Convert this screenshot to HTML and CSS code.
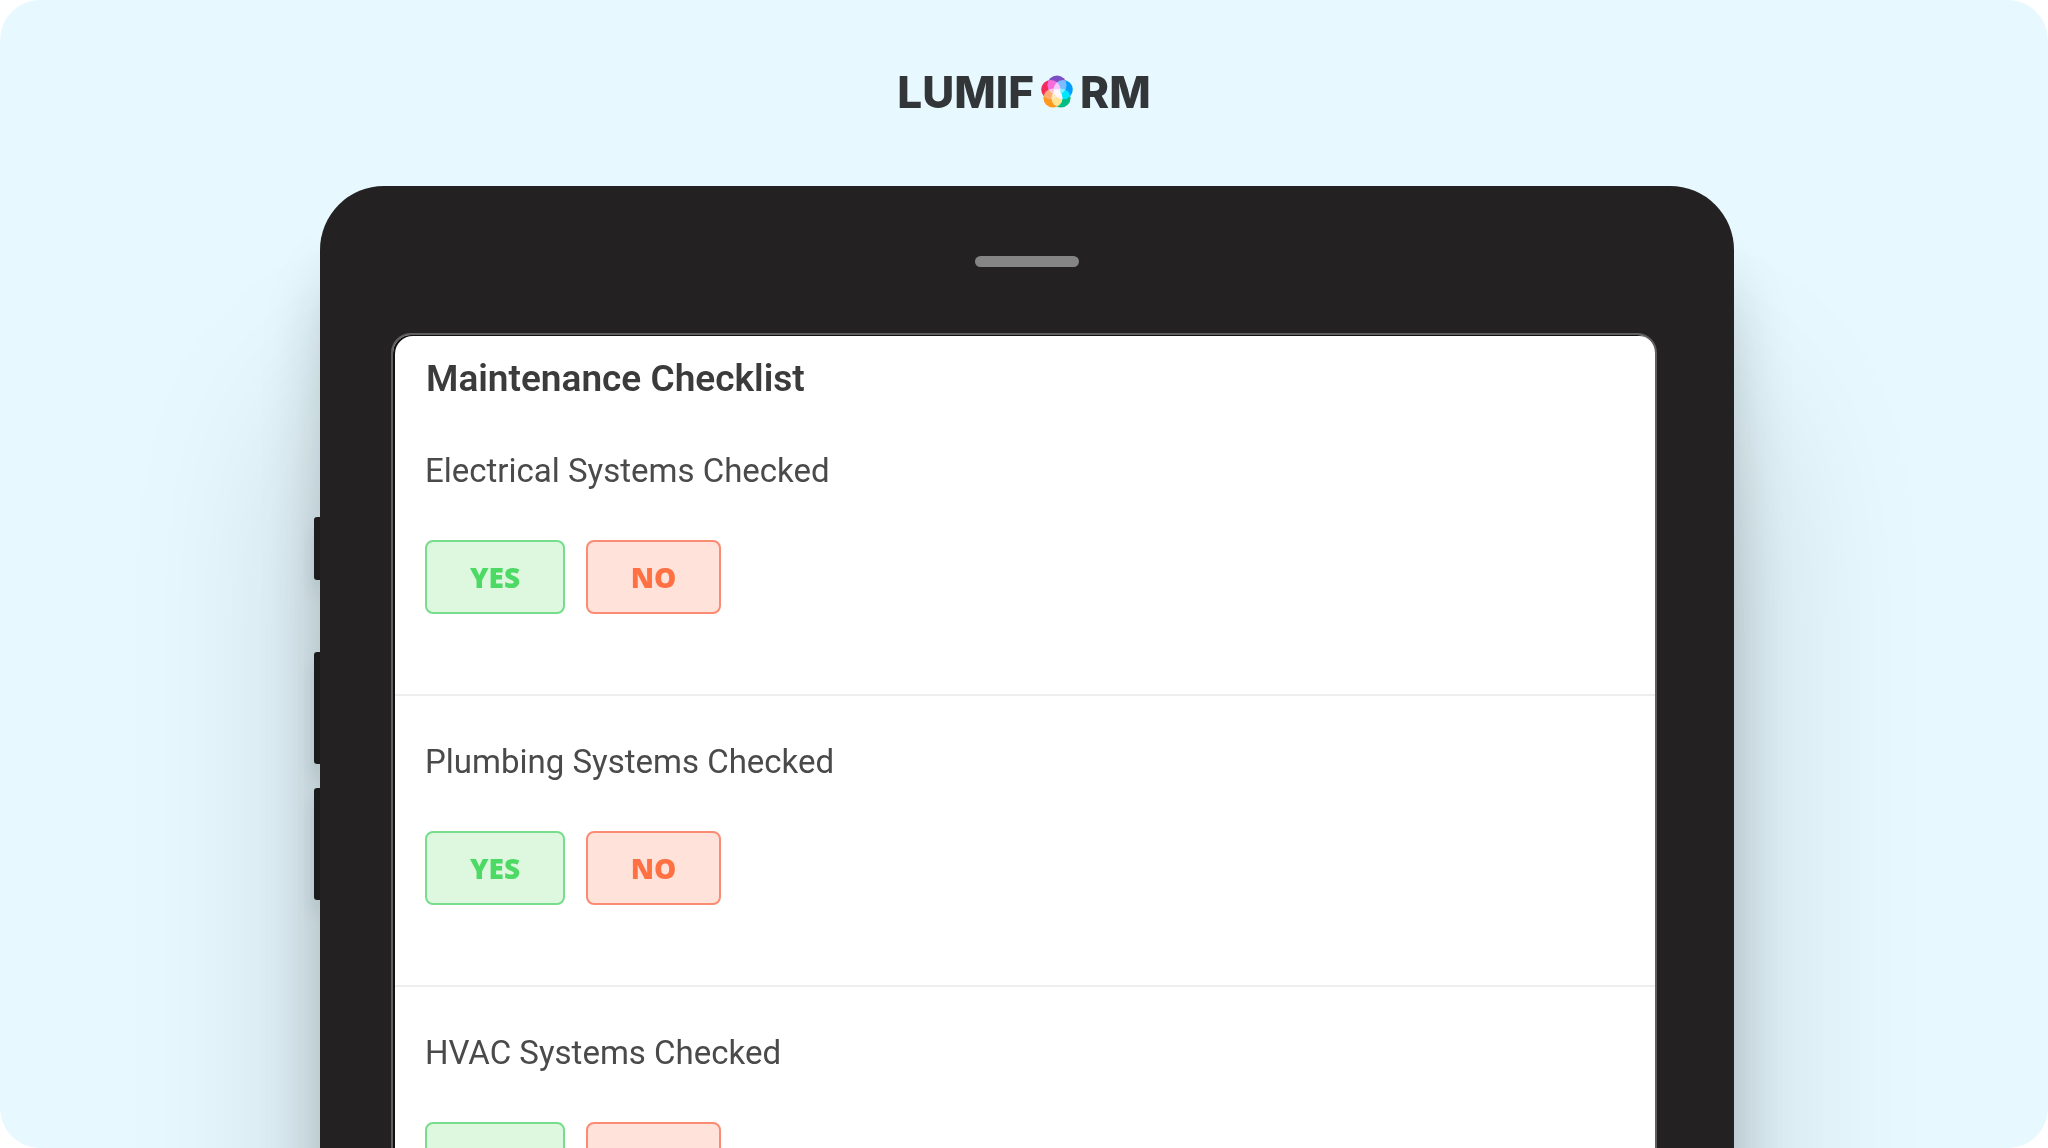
FILE: index.html
```html
<!DOCTYPE html>
<html lang="en">
<head>
<meta charset="utf-8">
<title>Lumiform – Maintenance Checklist</title>
<meta name="viewport" content="width=device-width, initial-scale=1">
<link rel="stylesheet" href="styles.css">
</head>
<body>
<div class="stage">
  <header class="brand">
    <span>LUMIF</span>
    <svg class="brand-mark" viewBox="0 0 32 34" role="img" aria-label="O">
      <g class="petals">
        <circle cx="16" cy="10" r="9.600" fill="#7d4fc4"/>
        <circle cx="22.200" cy="14.600" r="9.600" fill="#009dff"/>
        <circle cx="20" cy="23" r="9.600" fill="#00bd83"/>
        <circle cx="12" cy="23" r="9.600" fill="#ff9a1f"/>
        <circle cx="9.800" cy="14.600" r="9.600" fill="#f32a5e"/>
      </g>
    </svg>
    <span>RM</span>
  </header>

  <div class="device">
    <div class="side-keys">
      <i class="key key-short"></i>
      <i class="key"></i>
      <i class="key"></i>
    </div>
    <div class="bezel">
      <div class="speaker"></div>
      <main class="screen">
        <h1 class="title">Maintenance Checklist</h1>
        <section class="item" aria-labelledby="q1">
          <h2 class="question" id="q1">Electrical Systems Checked</h2>
          <div class="answers">
            <button class="answer yes" type="button">YES</button>
            <button class="answer no" type="button">NO</button>
          </div>
        </section>
        <section class="item" aria-labelledby="q2">
          <h2 class="question" id="q2">Plumbing Systems Checked</h2>
          <div class="answers">
            <button class="answer yes" type="button">YES</button>
            <button class="answer no" type="button">NO</button>
          </div>
        </section>
        <section class="item" aria-labelledby="q3">
          <h2 class="question" id="q3">HVAC Systems Checked</h2>
          <div class="answers">
            <button class="answer yes" type="button">YES</button>
            <button class="answer no" type="button">NO</button>
          </div>
        </section>
      </main>
    </div>
  </div>
</div>
</body>
</html>
```
FILE: styles.css
```css
* {
  box-sizing: border-box;
}

body {
  margin: 0;
  background: #fff;
  font-family: Roboto, "Liberation Sans", sans-serif;
}

.stage {
  display: flex;
  flex-direction: column;
  align-items: center;
  height: 100vh;
  overflow: hidden;
  border-radius: 40px;
  background: #e7f9ff;
}

/* Logo */
.brand {
  display: flex;
  flex: none;
  align-items: center;
  gap: 7px;
  margin-top: 66px;
  color: #323639;
  font: 800 44px/52px Inter, sans-serif;
}

.brand-mark {
  width: 32px;
  height: 34px;
}

.petals {
  isolation: isolate;
}

.petals circle {
  mix-blend-mode: screen;
}

/* Tablet */
.device {
  display: flex;
  flex: none;
  width: 70%;
  max-width: 1420px;
  margin-top: 68px;
}

.side-keys {
  display: flex;
  flex: none;
  flex-direction: column;
  gap: 24px;
  width: 6px;
  padding-top: 331px;
}

.key {
  height: 112px;
  border-radius: 3px 0 0 3px;
  background: #232122;
  box-shadow: 0 12px 16px rgba(0, 0, 0, 0.15);
}

.key-short {
  height: 63px;
  margin-bottom: 48px;
}

.bezel {
  flex: 1;
  min-width: 0;
  padding: 70px 71px 77px;
  border-radius: 64px;
  background: #232122;
  box-shadow:
    0 80px 60px rgba(0, 0, 0, 0.18),
    0 220px 190px rgba(0, 0, 0, 0.18);
}

.speaker {
  width: 104px;
  height: 11px;
  margin: 0 auto;
  border-radius: 6px;
  background: #858585;
}

.screen {
  margin: 66px 6px 0 0;
  padding: 1px 0 0 2px;
  border: 2px solid #5f5f5f;
  border-radius: 20px;
  background: #fff;
  box-shadow: inset 2px 1px 0 #111;
}

.title {
  margin: 0;
  padding: 22px 31px 0;
  color: #3b3b3b;
  font-size: 37px;
  font-weight: 600;
  line-height: 42px;
}

.item {
  padding: 46px 30px 80px;
  border-bottom: 2px solid #eee;
}

.title + .item {
  padding-top: 51px;
}

.question {
  margin: 0;
  color: #4a4a4a;
  font-size: 33px;
  font-weight: 400;
  line-height: 40px;
}

.answers {
  display: flex;
  gap: 21px;
  margin-top: 49px;
}

.answer {
  height: 74px;
  padding: 0 42px;
  border: 2px solid;
  border-radius: 8px;
  font: 800 28px/32px "Open Sans", sans-serif;
}

.yes {
  min-width: 140px;
  border-color: #75dd8b;
  background: #def8e0;
  color: #4cd964;
}

.no {
  min-width: 135px;
  border-color: #f98c72;
  background: #ffe2da;
  color: #ff7043;
}
```
